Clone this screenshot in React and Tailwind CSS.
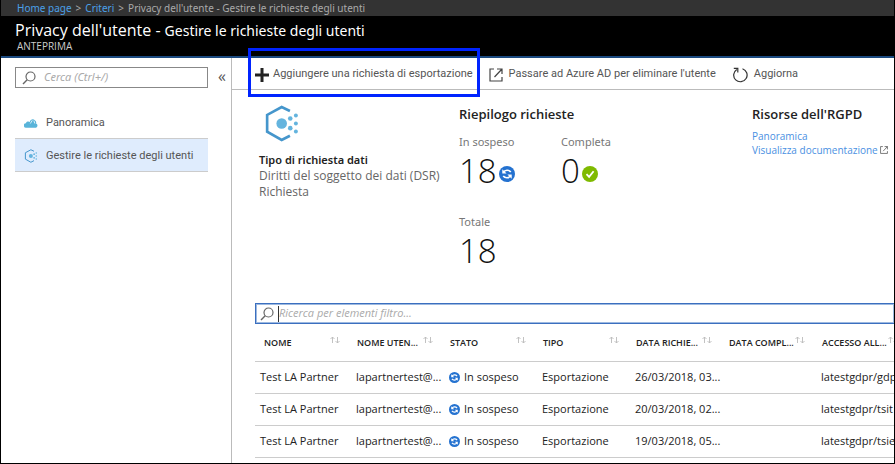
import React from "react";

function PrivacyLogo({ className }) {
  return (
    <svg viewBox="0 0 102 112" className={className} fill="none" aria-hidden="true">
      <path d="M75 18 50 6 6 30v51l44 25 25-13" stroke="#4596cc" strokeWidth="8" />
      <g fill="#64b4de">
        <circle cx="50" cy="56" r="16" />
        <circle cx="76" cy="41" r="7" />
        <circle cx="76" cy="70" r="7" />
        <circle cx="93" cy="32" r="6" />
        <circle cx="93" cy="56" r="6" />
        <circle cx="93" cy="80" r="6" />
      </g>
    </svg>
  );
}

function CloudIcon() {
  return (
    <svg viewBox="0 0 44 28" className="h-[9px] w-[14px] shrink-0" aria-hidden="true">
      <path d="M7 27a7 7 0 0 1-1-14 8 8 0 0 1 12-4 9 9 0 0 1 16-5 9 9 0 0 1 4 10 7 7 0 0 1 0 13Z" fill="#59b4d9" />
      <path d="m20 14 6-10M31 5l3 9" stroke="#fff" strokeWidth="2.5" />
    </svg>
  );
}

function SearchIcon() {
  return (
    <svg viewBox="0 0 14 14" className="size-[14px] shrink-0" fill="none" stroke="#666" aria-hidden="true">
      <circle cx="8.5" cy="5.5" r="4.5" strokeWidth="1.2" />
      <path d="M5.2 8.8 1 13" strokeWidth="1.4" />
    </svg>
  );
}

function ExternalIcon({ className }) {
  return (
    <svg viewBox="0 0 14 14" className={className} fill="none" stroke="#444" strokeWidth="1.2" aria-hidden="true">
      <path d="M5 1H1v12h12V9M8 1h5v5M13 1 5.5 9" />
    </svg>
  );
}

function ReloadIcon() {
  return (
    <svg viewBox="0 0 16 16" className="size-4 shrink-0" fill="none" stroke="#333" strokeWidth="1.2" aria-hidden="true">
      <path d="M10.5 1.7A6.7 6.7 0 1 1 4.8 2.4" />
      <path d="M1.8 1.4h4v4" />
    </svg>
  );
}

function SyncBadge({ className }) {
  return (
    <svg viewBox="0 0 16 16" className={className} fill="none" aria-label="In sospeso" role="img">
      <circle cx="8" cy="8" r="8" fill="#2472d0" />
      <path d="M4.2 6.4C6 3.7 9.8 3.5 11.8 6M11.8 9.6C10 12.3 6.2 12.5 4.2 10" stroke="#fff" strokeWidth="1.7" />
      <path d="M3.3 3.2v4.3h4.3ZM12.7 12.8V8.5H8.4Z" fill="#fff" />
    </svg>
  );
}

function CheckBadge() {
  return (
    <svg viewBox="0 0 16 16" className="size-4" fill="none" aria-label="Completa" role="img">
      <circle cx="8" cy="8" r="8" fill="#7fba00" />
      <path d="m4.5 8.2 2.6 2.7 4.5-5.6" stroke="#fff" strokeWidth="1.8" />
    </svg>
  );
}

function SortIcon() {
  return (
    <svg viewBox="0 0 10 8" className="mb-1 h-2 w-[10px] shrink-0" fill="none" stroke="#bbb" strokeWidth="0.9" aria-hidden="true">
      <path d="M2.5 7V1M.5 3l2-2 2 2M7.5 1v6M5.5 5l2 2 2-2" />
    </svg>
  );
}

function Stat({ label, value, children }) {
  return (
    <div className="w-[102px]">
      <div className="text-[11px] leading-4 text-[#777]">{label}</div>
      <div className="flex h-[42px] items-center gap-[2px] font-['Open_Sans'] text-[33px] leading-[42px] font-light text-[#111]">
        <span>{value}</span>
        <span className="mt-[6px]">{children}</span>
      </div>
    </div>
  );
}

const columns = ["NOME", "NOME UTEN...", "STATO", "TIPO", "DATA RICHIE...", "DATA COMPL...", "ACCESSO ALL..."];

const rows = [
  ["26/03/2018, 03...", "latestgdpr/gdp"],
  ["20/03/2018, 02...", "latestgdpr/tsit"],
  ["19/03/2018, 05...", "latestgdpr/tsie"],
];

function RequestsTable() {
  return (
    <table className="w-full min-w-[653px] table-fixed border-collapse text-left font-['Open_Sans','Noto_Sans',sans-serif] text-[11px] whitespace-nowrap text-[#222]">
      <colgroup>
        <col className="w-[95px]" />
        <col className="w-[93px]" />
        <col className="w-[93px]" />
        <col className="w-[93px]" />
        <col className="w-[93px]" />
        <col className="w-[93px]" />
        <col />
      </colgroup>
      <thead>
        <tr className="h-[37px] border-b border-[#ccc]">
          {columns.map((name, i) => (
            <th key={name} scope="col" className={i === 0 ? "pr-[10px] pl-[9px]" : "pr-[10px] pl-[7px]"}>
              <span className="flex items-center justify-between text-[9px] font-semibold">
                {name}
                <SortIcon />
              </span>
            </th>
          ))}
        </tr>
      </thead>
      <tbody>
        {rows.map(([date, path]) => (
          <tr key={date} className="h-8 border-b border-[#ccc]">
            <td className="pl-[5px]">Test LA Partner</td>
            <td className="pl-[6px]">lapartnertest@...</td>
            <td className="pl-[6px]">
              <span className="flex items-center gap-1">
                <SyncBadge className="size-[11px] shrink-0" />
                In sospeso
              </span>
            </td>
            <td className="pl-[6px]">Esportazione</td>
            <td className="pl-[6px]">{date}</td>
            <td className="pl-[6px]"></td>
            <td className="pl-[6px]">{path}</td>
          </tr>
        ))}
      </tbody>
    </table>
  );
}

export default function App() {
  return (
    <div className="flex min-h-screen flex-col overflow-hidden border-x border-b border-black bg-white font-['Noto_Sans','Open_Sans',sans-serif]">
      <nav aria-label="Percorso" className="flex h-4 items-center gap-1 bg-[#333] pl-4 text-[10px] leading-4 text-[#aaa]">
        <a href="#home" className="text-[#4ba0e8]">Home page</a>
        <span>&gt;</span>
        <a href="#criteri" className="text-[#4ba0e8]">Criteri</a>
        <span>&gt;</span>
        <span>Privacy dell'utente - Gestire le richieste degli utenti</span>
      </nav>
      <header className="h-[42px] border-b-2 border-[#1b4a80] bg-black pt-1 pl-[14px] text-white">
        <h1 className="flex items-baseline gap-1 text-[16px] leading-5">
          <span className="font-['Open_Sans']">Privacy dell'utente -</span>
          <span className="text-[14px]">Gestire le richieste degli utenti</span>
        </h1>
        <p className="pl-[2px] font-['Open_Sans'] text-[10px] leading-[10px] text-[#ccc]">ANTEPRIMA</p>
      </header>

      <div className="flex flex-1">
        <aside className="w-[231px] shrink-0 border-r border-[#bbb] pt-[9px] pl-[14px] font-['Roboto','Noto_Sans',sans-serif] text-[11px] text-[#555]">
          <div className="flex items-center gap-[10px]">
            <label className="flex h-[21px] w-[193px] items-center gap-2 border border-[#888] px-[6px]">
              <SearchIcon />
              <input type="search" aria-label="Cerca" placeholder="Cerca (Ctrl+/)" className="w-full min-w-0 font-['Noto_Sans'] outline-none placeholder:text-[#aaa] placeholder:italic" />
            </label>
            <button type="button" aria-label="Comprimi menu" className="pb-1 font-['Open_Sans'] text-[16px] leading-4">«</button>
          </div>
          <nav aria-label="Menu" className="mt-[18px] w-[193px]">
            <a href="#panoramica" className="flex h-8 items-center gap-2 pt-[2px] pl-[9px]">
              <CloudIcon />
              Panoramica
            </a>
            <a href="#gestire" aria-current="page" className="flex h-[34px] items-center gap-2 border-y border-[#ccc] bg-[#dfecfd] pt-[2px] pl-[9px]">
              <PrivacyLogo className="size-[14px] shrink-0" />
              <span className="whitespace-nowrap">Gestire le richieste degli utenti</span>
            </a>
          </nav>
        </aside>

        <main className="min-w-0 flex-1">
          <div className="flex h-8 items-center gap-4 border-b border-[#bbb] pt-[2px] pl-[23px] font-['Roboto','Noto_Sans',sans-serif] text-[11px] whitespace-nowrap text-[#555]">
            <button type="button" className="relative flex items-center gap-1">
              <span className="pointer-events-none absolute -inset-x-[7px] -top-[18px] -bottom-[14px] border-3 border-[#0024ff]" />
              <svg viewBox="0 0 14 14" className="size-[14px]" aria-hidden="true">
                <path d="M0 7h14M7 0v14" stroke="#222" strokeWidth="3" />
              </svg>
              Aggiungere una richiesta di esportazione
            </button>
            <button type="button" className="flex items-center gap-[6px]">
              <ExternalIcon className="size-[14px]" />
              Passare ad Azure AD per eliminare l'utente
            </button>
            <button type="button" className="flex items-center gap-[6px]">
              <ReloadIcon />
              Aggiorna
            </button>
          </div>

          <div className="flex h-[213px] pl-[27px] whitespace-nowrap">
            <section className="w-[200px] shrink-0 pt-[15px] text-[12px] leading-4 text-[#666]">
              <PrivacyLogo className="ml-[6px] h-[37px] w-[34px]" />
              <h2 className="mt-[10px] text-[11px] font-semibold text-[#222]">Tipo di richiesta dati</h2>
              <p className="font-['Open_Sans']">Diritti del soggetto dei dati (DSR)</p>
              <p className="font-['Open_Sans']">Richiesta</p>
            </section>
            <section className="flex-1 pt-[14px]">
              <h2 className="font-['Open_Sans'] text-[13px] leading-5 font-semibold text-[#222]">Riepilogo richieste</h2>
              <div className="mt-[10px] flex">
                <Stat label="In sospeso" value="18"><SyncBadge className="size-4" /></Stat>
                <Stat label="Completa" value="0"><CheckBadge /></Stat>
              </div>
              <div className="mt-[22px]">
                <Stat label="Totale" value="18" />
              </div>
            </section>
            <section className="w-[142px] shrink-0 pt-[14px] font-['Open_Sans','Noto_Sans',sans-serif] text-[10px] leading-[14px] text-[#4a90e2]">
              <h2 className="mb-[5px] text-[13px] leading-5 font-semibold text-[#222]">Risorse dell'RGPD</h2>
              <a href="#risorse" className="block">Panoramica</a>
              <a href="#documentazione" className="flex items-center gap-[2px]">
                Visualizza documentazione
                <ExternalIcon className="size-2 shrink-0" />
              </a>
            </section>
          </div>

          <div className="overflow-hidden pl-[23px]">
            <label className="flex h-[21px] items-center border-y border-l border-[#3b6fbf] pl-1 text-[11px] shadow-[inset_0_0_0_1px_#9db9e0]">
              <SearchIcon />
              <span className="ml-1 h-4 w-px bg-[#333]" />
              <input type="search" aria-label="Filtro" placeholder="Ricerca per elementi filtro..." className="w-full min-w-0 font-['Open_Sans'] outline-none placeholder:text-[#aaa] placeholder:italic" />
            </label>
            <RequestsTable />
          </div>
        </main>
      </div>
    </div>
  );
}
